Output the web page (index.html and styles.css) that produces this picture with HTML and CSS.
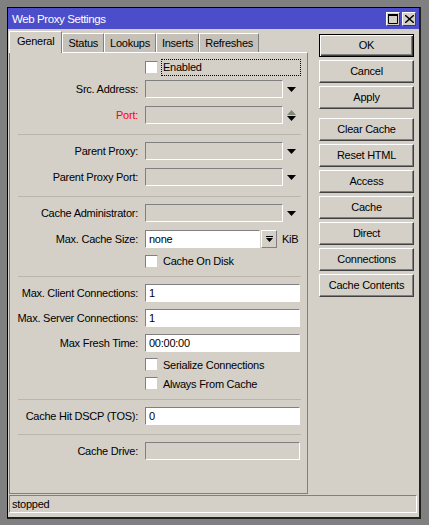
FILE: index.html
```html
<!DOCTYPE html>
<html lang="en">
<head>
    <meta charset="UTF-8">
    <title>Web Proxy Settings</title>
    <link rel="stylesheet" href="styles.css">
</head>
<body>
    <div class="window">
        <div class="titlebar">
            <span class="title">Web Proxy Settings</span>
            <div class="title-btns">
                <div class="tbtn">
                    <svg width="10" height="10" viewBox="0 0 10 10"><path d="M0.5 1h9v8.5h-9z" fill="none" stroke="#000"/><path d="M0 0h10v2H0z"/></svg>
                </div>
                <div class="tbtn">
                    <svg width="9" height="8" viewBox="0 0 9 8"><path d="M1 0l3.5 3L8 0h1v1L5.5 4 9 7v1H8L4.5 5 1 8H0V7l3.5-3L0 1V0z"/></svg>
                </div>
            </div>
        </div>

        <div class="main">
            <div class="left">
                <div class="tabs">
                    <div class="tab active">General</div>
                    <div class="tab">Status</div>
                    <div class="tab">Lookups</div>
                    <div class="tab">Inserts</div>
                    <div class="tab">Refreshes</div>
                </div>

                <div class="panel">
                    <div class="row check">
                        <span class="lbl"></span>
                        <span class="box"></span>
                        <span class="check-text focused">Enabled</span>
                    </div>
                    <div class="row">
                        <span class="lbl">Src. Address:</span>
                        <span class="field"></span>
                        <svg class="dd" width="9" height="5" viewBox="0 0 9 5"><path d="M0 0h9L4.5 5z"/></svg>
                    </div>
                    <div class="row">
                        <span class="lbl red">Port:</span>
                        <span class="field"></span>
                        <svg class="dd" width="9" height="13" viewBox="0 0 9 13"><path d="M0 6h9L4.5 1z" fill="#808878"/><path d="M0 7h9L4.5 12z"/></svg>
                    </div>

                    <div class="sep"></div>

                    <div class="row">
                        <span class="lbl">Parent Proxy:</span>
                        <span class="field"></span>
                        <svg class="dd" width="9" height="5" viewBox="0 0 9 5"><path d="M0 0h9L4.5 5z"/></svg>
                    </div>
                    <div class="row">
                        <span class="lbl">Parent Proxy Port:</span>
                        <span class="field"></span>
                        <svg class="dd" width="9" height="5" viewBox="0 0 9 5"><path d="M0 0h9L4.5 5z"/></svg>
                    </div>

                    <div class="sep"></div>

                    <div class="row">
                        <span class="lbl">Cache Administrator:</span>
                        <span class="field"></span>
                        <svg class="dd" width="9" height="5" viewBox="0 0 9 5"><path d="M0 0h9L4.5 5z"/></svg>
                    </div>
                    <div class="row">
                        <span class="lbl">Max. Cache Size:</span>
                        <span class="field edit short">none</span>
                        <span class="spin-btn">
                            <svg width="7" height="7" viewBox="0 0 7 7"><path d="M0 0h7v1H0z"/><path d="M0 2h7L3.5 6z"/></svg>
                        </span>
                        <span class="unit">KiB</span>
                    </div>
                    <div class="row check">
                        <span class="lbl"></span>
                        <span class="box"></span>
                        <span class="check-text">Cache On Disk</span>
                    </div>

                    <div class="sep"></div>

                    <div class="row tight">
                        <span class="lbl">Max. Client Connections:</span>
                        <span class="field edit">1</span>
                    </div>
                    <div class="row tight">
                        <span class="lbl">Max. Server Connections:</span>
                        <span class="field edit">1</span>
                    </div>
                    <div class="row tight">
                        <span class="lbl">Max Fresh Time:</span>
                        <span class="field edit">00:00:00</span>
                    </div>
                    <div class="row check loose">
                        <span class="lbl"></span>
                        <span class="box"></span>
                        <span class="check-text">Serialize Connections</span>
                    </div>
                    <div class="row check loose">
                        <span class="lbl"></span>
                        <span class="box"></span>
                        <span class="check-text">Always From Cache</span>
                    </div>

                    <div class="sep"></div>

                    <div class="row tight">
                        <span class="lbl">Cache Hit DSCP (TOS):</span>
                        <span class="field edit">0</span>
                    </div>

                    <div class="sep"></div>

                    <div class="row">
                        <span class="lbl">Cache Drive:</span>
                        <span class="field wide"></span>
                    </div>
                </div>
            </div>

            <div class="buttons">
                <div class="btn default">OK</div>
                <div class="btn">Cancel</div>
                <div class="btn">Apply</div>
                <div class="btn group">Clear Cache</div>
                <div class="btn">Reset HTML</div>
                <div class="btn">Access</div>
                <div class="btn">Cache</div>
                <div class="btn">Direct</div>
                <div class="btn">Connections</div>
                <div class="btn">Cache Contents</div>
            </div>
        </div>

        <div class="statusbar">stopped</div>
    </div>
</body>
</html>
```

FILE: styles.css
```css
body {
    margin: 0;
    padding: 7px;
    background: #808080;
    font-family: "Liberation Sans", Arial, sans-serif;
    font-size: 11px;
    letter-spacing: -0.25px;
    color: #000;
}
.window {
    width: 414px;
    height: 512px;
    box-sizing: border-box;
    background: #d4d0c8;
    border-top: 1px solid #000;
    border-left: 1px solid #000;
    border-right: 2px solid #202020;
    border-bottom: 2px solid #202020;
}
.titlebar {
    height: 21px;
    background: #4b4dcb;
    color: #fff;
    display: flex;
    align-items: center;
    padding-left: 4px;
}
.title {
    font-size: 11.5px;
    letter-spacing: -0.4px;
}
.title-btns {
    margin-left: auto;
    margin-right: 3px;
    display: flex;
    gap: 2px;
}
.tbtn {
    width: 14px;
    height: 14px;
    box-sizing: border-box;
    background: #d4d0c8;
    border: 1px solid;
    border-color: #fff #404040 #404040 #fff;
    display: flex;
    align-items: center;
    justify-content: center;
}
.tbtn svg {
    display: block;
}
.main {
    display: flex;
    gap: 11px;
    padding: 2px 0 0 1px;
    height: 465px;
    box-sizing: border-box;
}
.left {
    width: 299px;
    display: flex;
    flex-direction: column;
}
.tabs {
    display: flex;
    align-items: flex-end;
    height: 21px;
}
.tab {
    height: 19px;
    line-height: 18px;
    box-sizing: border-box;
    padding: 0 5px;
    background: #c5c1b9;
    border-top: 1px solid #fff;
    border-left: 1px solid #fff;
    border-right: 1px solid #808080;
}
.tab.active {
    height: 22px;
    line-height: 19px;
    padding: 0 7px;
    margin-bottom: -1px;
    background: #d4d0c8;
    position: relative;
    z-index: 1;
}
.panel {
    flex: 1;
    box-sizing: border-box;
    border: 1px solid #808080;
    border-top-color: #fff;
    padding-top: 5px;
    display: flex;
    flex-direction: column;
}
.row {
    display: flex;
    align-items: center;
    height: 26px;
    flex: none;
}
.row.tight {
    height: 25px;
}
.row.check {
    height: 18px;
}
.row.check.loose {
    height: 19px;
}
.lbl {
    width: 128px;
    margin-right: 7px;
    text-align: right;
    flex: none;
    white-space: nowrap;
}
.red {
    color: #f00;
}
.field {
    width: 138px;
    height: 18px;
    box-sizing: border-box;
    border: 1px solid;
    border-color: #808080 #fff #fff #808080;
    background: #d4d0c8;
    flex: none;
}
.field.edit {
    width: 155px;
    background: #fff;
    padding-left: 3px;
    line-height: 16px;
}
.field.edit.short {
    width: 115px;
}
.field.wide {
    width: 155px;
}
.dd {
    margin-left: 4px;
    display: block;
}
.spin-btn {
    width: 16px;
    height: 18px;
    margin-left: 1px;
    box-sizing: border-box;
    border: 1px solid;
    border-color: #fff #808080 #808080 #fff;
    display: flex;
    align-items: center;
    justify-content: center;
}
.unit {
    margin-left: 5px;
}
.box {
    width: 13px;
    height: 13px;
    box-sizing: border-box;
    background: #fff;
    border: 1px solid;
    border-color: #808080 #d4d0c8 #d4d0c8 #808080;
    flex: none;
}
.check-text {
    margin-left: 5px;
}
.check-text.focused {
    margin-left: 3px;
    padding-left: 1px;
    width: 140px;
    height: 17px;
    line-height: 15px;
    box-sizing: border-box;
    border: 1px dotted #000;
}
.sep {
    height: 1px;
    background: #bab6ae;
    margin: 6px 6px 3px 8px;
    flex: none;
}
.buttons {
    display: flex;
    flex-direction: column;
    gap: 3px;
    padding-top: 3px;
}
.btn {
    width: 95px;
    height: 23px;
    box-sizing: border-box;
    border: 1px solid;
    border-color: #fff #404040 #404040 #fff;
    box-shadow: inset -1px -1px #808080;
    text-align: center;
    line-height: 20px;
}
.btn.default {
    border: 1px solid #000;
    box-shadow: inset 1px 1px #fff, inset -1px -1px #404040, inset -2px -2px #808080;
}
.btn.group {
    margin-top: 6px;
}
.statusbar {
    margin: 1px 0 0 1px;
    width: 408px;
    height: 18px;
    box-sizing: border-box;
    border: 1px solid;
    border-color: #808080 #fff #fff #808080;
    padding-left: 2px;
    line-height: 16px;
}
```
